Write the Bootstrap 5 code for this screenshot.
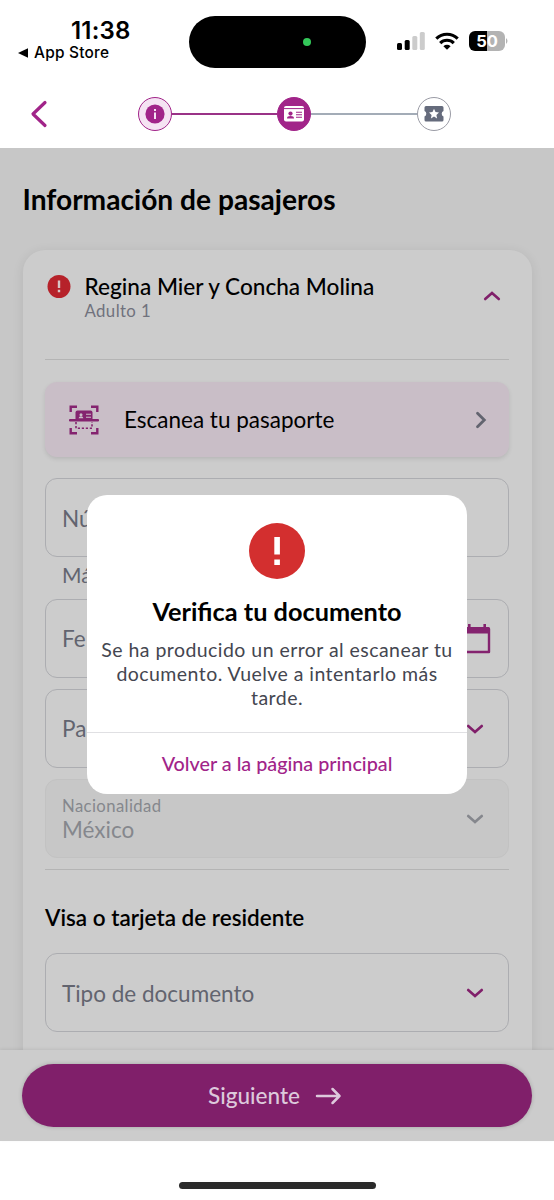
<!DOCTYPE html>
<html lang="es">
<head>
<meta charset="utf-8">
<meta name="viewport" content="width=device-width, initial-scale=1">
<title>Información de pasajeros</title>
<link href="https://cdn.jsdelivr.net/npm/bootstrap@5.3.0/dist/css/bootstrap.min.css" rel="stylesheet">
<style>
:root{--brand:#a12489;--brand-dim:#801f6a;--muted-dim:#62646f}
html,body{height:1200px;overflow:hidden}
body{font-family:Lato,"Liberation Sans",sans-serif;color:#000;background:#fff;line-height:1.2}
svg{display:block;flex:none}
.status{height:80px;font-family:Inter,"Liberation Sans",sans-serif}
.status-left{width:189px}
.clock{font-size:24px;font-weight:600;line-height:26px;padding-left:71px;margin-top:18px;letter-spacing:.2px}
.back-app{font-size:15.4px;font-weight:500;line-height:18px;padding-left:18px;letter-spacing:.25px}
.island{width:176.5px;height:52px;border-radius:26px;background:#000;margin-top:16px;padding-left:114px}
.cam{width:8px;height:8px;background:#33c759}
.signals{margin:31px 46px 0 auto;height:20px}
.batt{width:36px;height:20px;border-radius:6px;background:linear-gradient(90deg,#000 50%,#b3b3b3 50%);color:#fff;font-size:16.5px;font-weight:700;line-height:20px}
.steps{height:68px;padding:0 103px 0 29px}
.dot{width:34px;height:34px;border:1px solid var(--brand);background:#f5e3f3}
.dot.on{background:var(--brand)}
.dot.off{background:#fff;border-color:#9a9ba5}
.line{height:2px;background:#9a3287}
.line.off{background:#a3acb7}
.page{height:902px;background:#c7c7c7;padding:0 22.5px}
.title{font-size:28.15px;font-weight:700;line-height:32px;padding-top:35px;margin-bottom:35px}
.pcard{height:900px;border-radius:22px;background:#ccc;box-shadow:0 2px 12px rgba(0,0,0,.09);padding:0 23px 0 22px}
.phead{height:109px;padding:24px 0 0 2px}
.pname{font-size:22.6px;font-weight:500;line-height:25px}
.psub{font-size:16.8px;line-height:23px;color:#70727d;letter-spacing:.4px}
.rule{height:1px;background:#b4b4b4}
.scan{height:75px;border-radius:12px;background:#c9bec7;box-shadow:0 2px 4px rgba(0,0,0,.1);margin:22px 0 21px;padding:0 22px 0 24.5px;font-size:22.5px}
.field{height:79px;border:1.5px solid #acadb1;border-radius:12px;padding:1px 24px 0 16.5px;font-size:22.5px;color:var(--muted-dim)}
.field.dis{background:#c7c7c7;border-color:#c2c2c2;color:#85878d;padding-top:2px}
.hint{height:41.5px;padding:4px 0 0 17.5px;font-size:21px;line-height:27px;color:var(--muted-dim)}
.sub-title{font-size:22.5px;font-weight:600;line-height:28px;margin:34px 0 21.5px .5px}
.foot{height:91px;background:#ccc;box-shadow:0 -1px 3px rgba(0,0,0,.08);padding:14px 22px 0;position:relative}
.next{height:63px;border-radius:32px;background:var(--brand-dim);color:#ddc9dc;font-size:22.5px;font-weight:500;box-shadow:0 0 4px rgba(0,0,0,.2);padding-right:4px}
.home{width:197px;height:7px;margin:40.5px auto 0;background:#2b2b2b}
.dialog{position:absolute;left:87px;top:347px;width:380px;height:299px;border-radius:20px;background:#fff}
.dtitle{font-size:25.3px;font-weight:700;line-height:30px;margin-top:17px}
.dtext{font-size:19.5px;line-height:24px;color:#444650;letter-spacing:.45px;margin-top:12px}
.dlink{font-size:19.75px;font-weight:500;color:var(--brand);border-top:1px solid #e0e0e3;height:62px;line-height:62px}
</style>
</head>
<body>
<header class="status d-flex align-items-start">
  <div class="status-left">
    <div class="clock">11:38</div>
    <div class="back-app d-flex align-items-center"><svg width="10" height="10" class="me-1"><path d="M0 5 10 .3V9.7Z"/></svg><span class="ps-1" style="margin-left:-2px">App&nbsp;Store</span></div>
  </div>
  <div class="island d-flex align-items-center"><div class="cam rounded-circle"></div></div>
  <div class="signals d-flex align-items-center">
    <svg width="28" height="20"><rect x="0" y="12" width="5" height="7" rx="1.5"/><rect x="7.7" y="9" width="5" height="10" rx="1.5"/><rect x="15.3" y="5" width="5" height="14" rx="1.5" fill="#ccc"/><rect x="22.8" y="1" width="5" height="18" rx="1.5" fill="#ccc"/></svg>
    <svg width="24" height="18" viewBox="0 0 24 18" style="margin:0 10px"><g fill="none" stroke="#000" stroke-width="3.1"><path d="M1.300 6.600a15.200 15.200 0 0 1 21.400 0"/><path d="M5.200 11.100a9.600 9.600 0 0 1 13.600 0"/></g><path d="M8.400 14.200a5.100 5.100 0 0 1 7.200 0L12 17.800Z"/></svg>
    <div class="batt text-center">50</div>
    <svg width="3" height="8"><path d="M1 1q3 3 0 6z" fill="#b3b3b3"/></svg>
  </div>
</header>
<nav class="steps d-flex align-items-center">
  <svg width="20" height="28" viewBox="0 0 20 28"><path d="M16 2.500 4 14l12 11.500" fill="none" stroke="#a12489" stroke-width="3.200" stroke-linecap="round" stroke-linejoin="round"/></svg>
  <div class="dot rounded-circle d-flex align-items-center justify-content-center flex-shrink-0" style="margin-left:88.5px"><svg width="20" height="20"><circle cx="10" cy="10" r="9.600" fill="#a12489"/><path d="M9 5h2v2H9zM9 8.500h2V15H9z" fill="#f5e3f3"/></svg></div>
  <div class="line flex-fill"></div>
  <div class="dot on rounded-circle d-flex align-items-center justify-content-center flex-shrink-0"><svg width="20" height="16"><rect width="20" height="15.500" rx="2" fill="#fff"/><path d="M0 2.600h20" stroke="#a12489"/><circle cx="6.500" cy="7.600" r="2.100" fill="#a12489"/><path d="M3 12.500q0-2.400 3.500-2.400T10 12.500ZM12 5.700h6v1h-6zM12 8.200h6v1h-6zM12 10.700h6v1h-6z" fill="#a12489"/></svg></div>
  <div class="line off flex-fill"></div>
  <div class="dot off rounded-circle d-flex align-items-center justify-content-center flex-shrink-0"><svg width="20" height="16"><path d="M2 0h16q1.500 0 1.500 1.500V5a3 3 0 0 0 0 5.500V14q0 1.500-1.500 1.500H2Q.5 15.500.5 14v-3.500A3 3 0 0 0 .5 5V1.500Q.5 0 2 0Z" fill="#656b7c"/><path d="m10 2.800 1.500 3.300 3.500.4-2.600 2.400.7 3.500L10 10.600l-3.100 1.800.7-3.500L5 6.500l3.500-.4Z" fill="#fff"/></svg></div>
</nav>
<div class="position-relative">
<main class="page overflow-hidden">
  <h1 class="title">Información de pasajeros</h1>
  <section class="pcard">
    <div class="phead d-flex">
      <svg width="24" height="24"><circle cx="12" cy="12.500" r="11.500" fill="#b6222a"/><path d="M10.800 6.500h2.400V14h-2.400zM10.800 15.800h2.400v2.400h-2.400z" fill="#d8c5c6"/></svg>
      <div class="flex-fill" style="margin:0 0 0 14px"><div class="pname">Regina Mier y Concha Molina</div><div class="psub">Adulto 1</div></div>
      <svg width="18" height="12" style="margin:16px 8px 0 0"><path d="M2.200 9 9 3l6.800 6" fill="none" stroke="#801f6a" stroke-width="2.600" stroke-linecap="round"/></svg>
    </div>
    <div class="rule"></div>
    <div class="scan d-flex align-items-center">
      <svg width="30" height="30" viewBox="0 0 30 30"><g fill="none" stroke="#84236f" stroke-width="2.400"><path d="M1.700 7V1.700H8M22 1.700h6.300V7M1.700 23v5.300H8M22 28.300h6.300V23"/><path d="M1 15.200h28" stroke-linecap="round"/><path d="M7 17v6.200h16V17" stroke-width="1.600" stroke-dasharray="2.200 1.800"/></g><path d="M6.500 14V7.500q0-2 2-2h13q2 0 2 2V14Z" fill="#84236f"/><circle cx="12" cy="9.700" r="1.500" fill="#c9bec7"/><path d="M9.600 13.200q.3-2 2.400-2t2.400 2ZM17 8.700h5v1h-5zM17 11.700h5v1h-5z" fill="#c9bec7"/></svg>
      <span class="flex-fill" style="margin-left:25px">Escanea tu pasaporte</span>
      <svg width="12" height="18"><path d="m2.500 2.200 6.800 6.800-6.800 6.800" fill="none" stroke="#62646f" stroke-width="2.800" stroke-linecap="round"/></svg>
    </div>
    <div class="field d-flex align-items-center">Nú</div>
    <div class="hint">Má</div>
    <div class="field d-flex align-items-center justify-content-between" style="padding-right:17px">Fe
      <svg width="28" height="32"><path d="M2 6h24v23H2Z" fill="none" stroke="#84236f" stroke-width="2.400" stroke-linejoin="round"/><path d="M1 5.500Q1 4 2.500 4h23Q27 4 27 5.500v5H1ZM5 1h2.600v4H5zM20.400 1H23v4h-2.600z" fill="#84236f"/></svg>
    </div>
    <div class="field d-flex align-items-center justify-content-between" style="margin-top:11px">Pa
      <svg width="18" height="12"><path d="M2.200 3 9 9l6.800-6" fill="none" stroke="#801f6a" stroke-width="2.600" stroke-linecap="round"/></svg>
    </div>
    <div class="field dis d-flex align-items-center justify-content-between" style="margin-top:11px">
      <div><div style="font-size:16.700px;line-height:20px;letter-spacing:.4px">Nacionalidad</div><div style="line-height:27px">México</div></div>
      <svg width="18" height="12"><path d="M2.200 3 9 9l6.800-6" fill="none" stroke="#85878d" stroke-width="2.600" stroke-linecap="round"/></svg>
    </div>
    <div class="rule" style="margin-top:11px"></div>
    <h2 class="sub-title">Visa o tarjeta de residente</h2>
    <div class="field d-flex align-items-center justify-content-between">Tipo de documento
      <svg width="18" height="12"><path d="M2.200 3 9 9l6.800-6" fill="none" stroke="#801f6a" stroke-width="2.600" stroke-linecap="round"/></svg>
    </div>
  </section>
</main>
<div class="dialog text-center d-flex flex-column" role="dialog">
  <svg class="mx-auto" width="56" height="56" style="margin-top:28px"><circle cx="28" cy="28" r="28" fill="#d32f2f"/><path d="M25.300 14h5.600v17.500h-5.600zM25.300 36.500h5.600V42h-5.600z" fill="#fff"/></svg>
  <div class="dtitle">Verifica tu documento</div>
  <div class="dtext">Se ha producido un error al escanear tu<br>documento. Vuelve a intentarlo más<br>tarde.</div>
  <div class="dlink mt-auto">Volver a la página principal</div>
</div>
</div>
<footer class="foot">
  <div class="next d-flex align-items-center justify-content-center"><span>Siguiente</span>
    <svg width="27" height="20" style="margin-left:15px"><path d="M2 10h22.500M17.500 3l7 7-7 7" fill="none" stroke="#ddc9dc" stroke-width="2.500" stroke-linecap="round" stroke-linejoin="round"/></svg>
  </div>
</footer>
<div class="home rounded-pill"></div>
<script src="https://cdn.jsdelivr.net/npm/bootstrap@5.3.0/dist/js/bootstrap.bundle.min.js"></script>
</body>
</html>
